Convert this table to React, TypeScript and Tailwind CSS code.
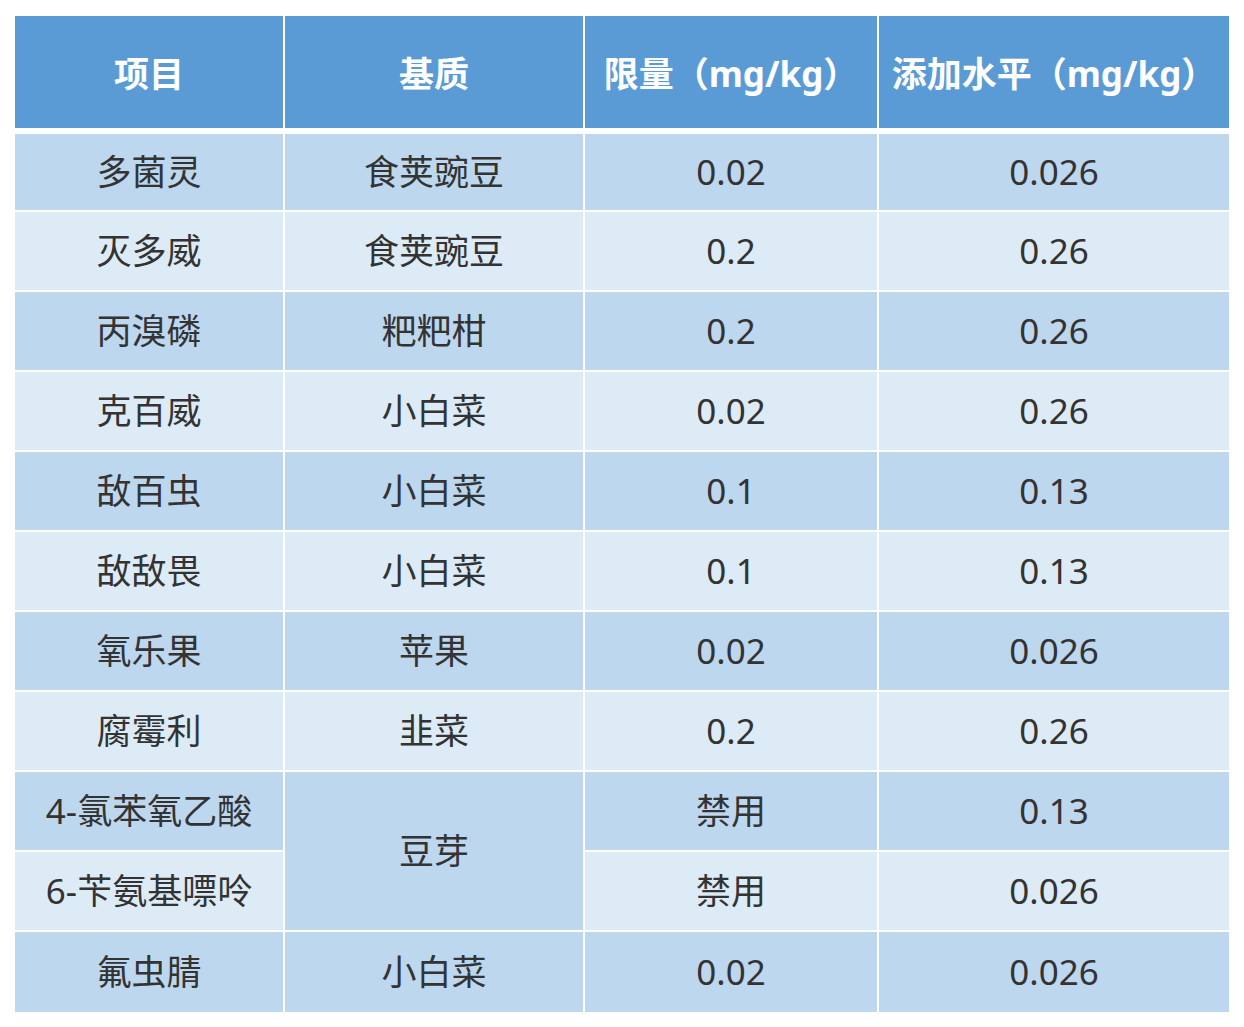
import React from "react";

const rows: { name: string; base?: string; limit: string; add: string; dark: boolean }[] = [
  { name: "多菌灵", base: "食荚豌豆", limit: "0.02", add: "0.026", dark: true },
  { name: "灭多威", base: "食荚豌豆", limit: "0.2", add: "0.26", dark: false },
  { name: "丙溴磷", base: "粑粑柑", limit: "0.2", add: "0.26", dark: true },
  { name: "克百威", base: "小白菜", limit: "0.02", add: "0.26", dark: false },
  { name: "敌百虫", base: "小白菜", limit: "0.1", add: "0.13", dark: true },
  { name: "敌敌畏", base: "小白菜", limit: "0.1", add: "0.13", dark: false },
  { name: "氧乐果", base: "苹果", limit: "0.02", add: "0.026", dark: true },
  { name: "腐霉利", base: "韭菜", limit: "0.2", add: "0.26", dark: false },
  { name: "4-氯苯氧乙酸", base: "豆芽", limit: "禁用", add: "0.13", dark: true },
  { name: "6-苄氨基嘌呤", limit: "禁用", add: "0.026", dark: false },
  { name: "氟虫腈", base: "小白菜", limit: "0.02", add: "0.026", dark: true },
];

const font = { fontFamily: '"Noto Sans", "Noto Sans CJK SC", sans-serif' };

export default function App() {
  return (
    <div className="w-[1244px] h-[1027px] bg-white pt-[16px] pl-[15px]" style={font}>
      <div className="w-[1214px]">
        <div className="grid grid-cols-[268px_298px_292px_350px] gap-x-[2px] h-[112px]">
          {["项目", "基质", "限量（mg/kg）", "添加水平（mg/kg）"].map((h) => (
            <div
              key={h}
              className="bg-[#5b9bd5] flex items-center justify-center pt-[4px] text-white font-bold text-[35px] whitespace-nowrap"
            >
              {h}
            </div>
          ))}
        </div>
        <div className="mt-[6px] grid grid-cols-[268px_298px_292px_350px] grid-rows-[76px_repeat(9,78px)_80px] gap-[2px] text-[#333333] text-[35px]">
          {rows.map((r, i) => {
            const bg = r.dark ? "bg-[#bdd7ee]" : "bg-[#ddebf7]";
            return (
              <React.Fragment key={i}>
                <div className={`${bg} flex items-center justify-center whitespace-nowrap`}>{r.name}</div>
                {r.base !== undefined && (
                  <div
                    className={`${bg} flex items-center justify-center whitespace-nowrap ${
                      r.base === "豆芽" ? "row-span-2" : ""
                    }`}
                  >
                    {r.base}
                  </div>
                )}
                <div className={`${bg} flex items-center justify-center whitespace-nowrap`}>{r.limit}</div>
                <div className={`${bg} flex items-center justify-center whitespace-nowrap`}>{r.add}</div>
              </React.Fragment>
            );
          })}
        </div>
      </div>
    </div>
  );
}
